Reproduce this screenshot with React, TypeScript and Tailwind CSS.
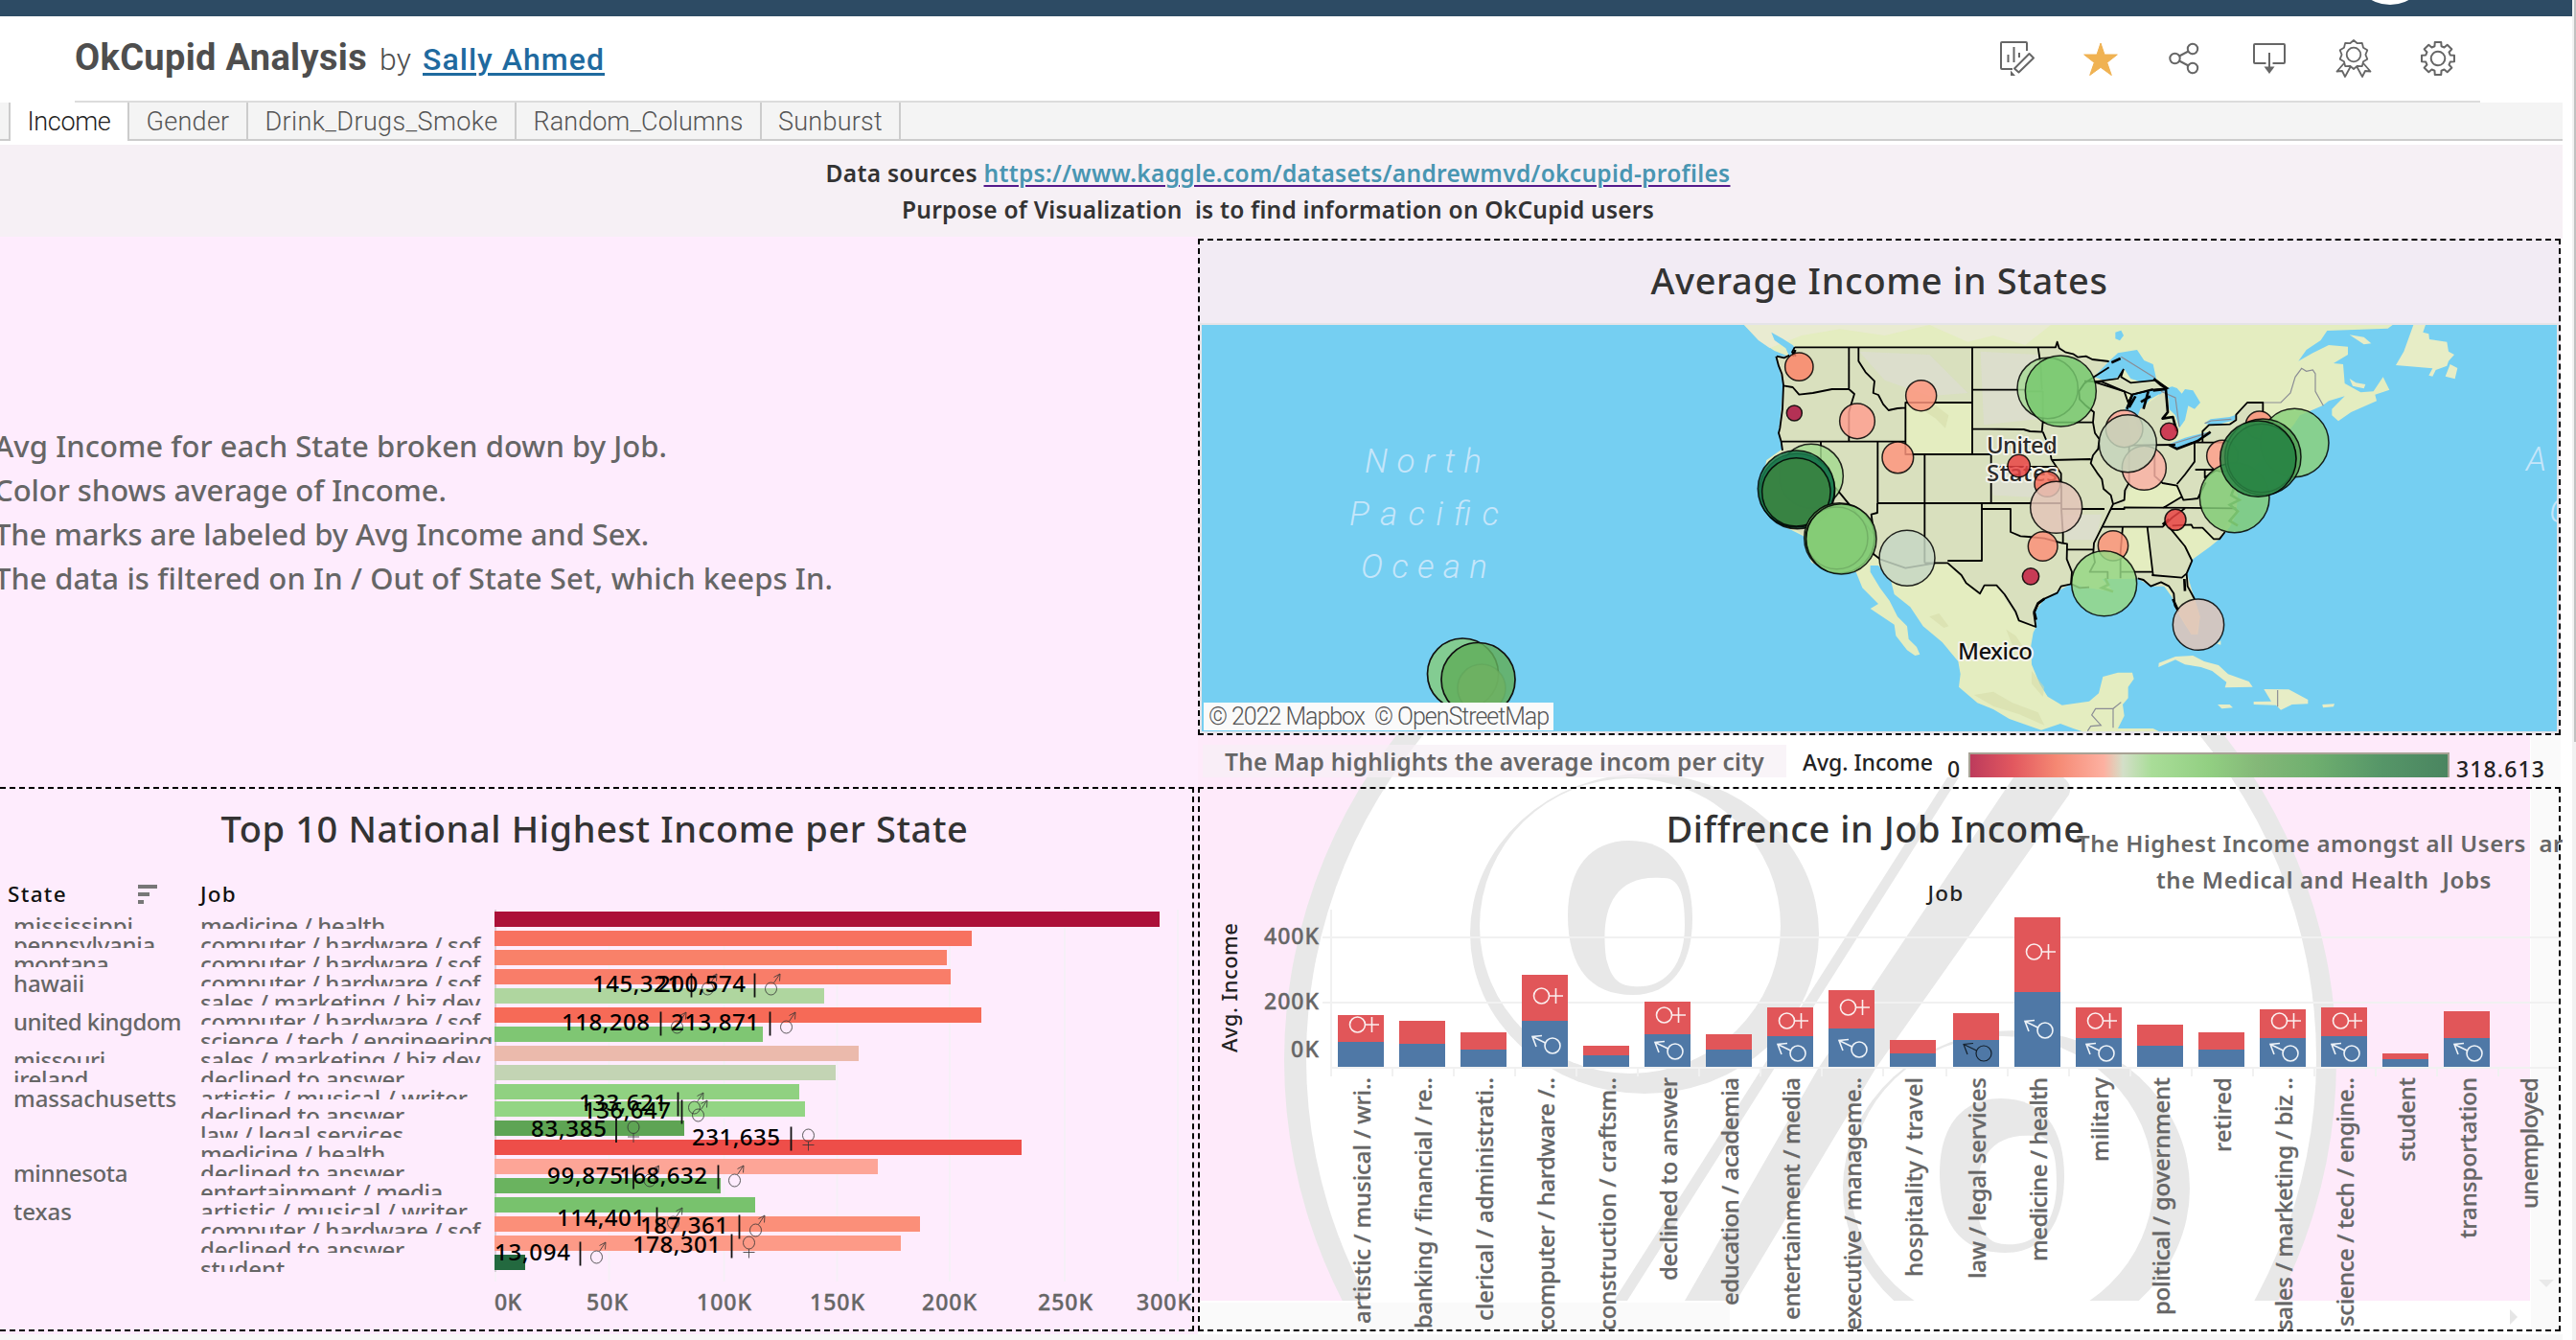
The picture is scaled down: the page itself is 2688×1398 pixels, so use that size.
import { useLayoutEffect, useRef, useState } from "react";
import type { ReactNode } from "react";

/** Text run tracked so that it fills a given width. */
function Fit({ w, className = "", children }: { w: number; className?: string; children: string }) {
  const ref = useRef<HTMLSpanElement>(null);
  const [ls, setLs] = useState(0);
  useLayoutEffect(() => {
    if (ref.current) setLs((w - ref.current.getBoundingClientRect().width) / children.length);
  }, [w, children]);
  return (
    <span ref={ref} className={"inline-block whitespace-pre " + className} style={{ letterSpacing: ls }}>
      {children}
    </span>
  );
}

const tabs = [
  { name: "Income", box: "w-[125px]", w: 87 },
  { name: "Gender", box: "w-[124px]", w: 87 },
  { name: "Drink_Drugs_Smoke", box: "w-[280px]", w: 243 },
  { name: "Random_Columns", box: "w-[256px]", w: 219 },
  { name: "Sunburst", box: "w-[145px]", w: 109 },
];

function Icon({ children }: { children: ReactNode }) {
  return (
    <svg className="size-12 shrink-0" viewBox="0 0 48 48" fill="none" stroke="#666" strokeWidth="2">
      {children}
    </svg>
  );
}

function gearPath() {
  let d = "";
  for (let i = 0; i < 8; i++) {
    const a = (i * Math.PI) / 4 - Math.PI / 2;
    const pts = [
      [-0.27, 13.2],
      [-0.19, 17.3],
      [0.19, 17.3],
      [0.27, 13.2],
    ];
    pts.forEach(([da, r], j) => {
      d += `${i === 0 && j === 0 ? "M" : "L"}${(24 + r * Math.cos(a + da)).toFixed(2)} ${(24 + r * Math.sin(a + da)).toFixed(2)}`;
    });
  }
  return d + "Z";
}

function rosettePath() {
  let d = "M";
  for (let i = 0; i < 20; i++) {
    const a = (i * Math.PI) / 10 - Math.PI / 2;
    const r = i % 2 === 0 ? 15 : 12.4;
    d += `${(24 + r * Math.cos(a)).toFixed(2)} ${(20 + r * Math.sin(a)).toFixed(2)} `;
  }
  return d + "Z";
}

function Header() {
  return (
    <header className="flex h-[88px] items-center justify-between bg-white pl-[78px] pr-[116px]">
      <div className="flex items-baseline font-['Roboto'] leading-[90px] text-[#4e4e4e]">
        <Fit w={305} className="mr-[13px] text-[38px] font-bold">OkCupid Analysis</Fit>
        <Fit w={33} className="mr-[12px] text-[32px] font-light">by</Fit>
        <a className="text-[32px] font-medium text-[#1f6a9f]">
          <Fit w={190} className="underline decoration-[3px] underline-offset-[3px]">Sally Ahmed</Fit>
        </a>
      </div>
      <div className="flex gap-10">
        <Icon>
          <path d="M35 16V8a1 1 0 0 0-1-1H9a1 1 0 0 0-1 1v26a1 1 0 0 0 1 1h11M15.500 20v8M21.500 12v16M27 18v5" />
          <path d="M22 34.500L37.500 19l4.500 4.500L26.500 38.500Z" strokeLinejoin="round" />
          <path d="M18 36.500v5.500h5Z" fill="#666" stroke="none" />
        </Icon>
        <Icon>
          <path
            d="M24 8l4 12h13.300l-10.600 8.300 4.600 13.200L24 33.300 12.700 41.500l4.600-13.200L6.700 20H20Z"
            fill="#f0b252"
            stroke="#f0b252"
            strokeLinejoin="round"
            strokeWidth="1"
          />
        </Icon>
        <Icon>
          <circle cx="13.500" cy="24" r="5.200" />
          <circle cx="32" cy="14" r="5.200" />
          <circle cx="32" cy="34" r="5.200" />
          <path d="M18 21.500l9.500-5M18 26.500l9.500 5" />
        </Icon>
        <Icon>
          <path d="M20.500 29H9a1 1 0 0 1-1-1V10a1 1 0 0 1 1-1h30a1 1 0 0 1 1 1v18a1 1 0 0 1-1 1H27.500M24 18v16" />
          <path d="M18.500 32.500h11L24 40Z" fill="#666" stroke="none" />
        </Icon>
        <Icon>
          <path d={rosettePath()} strokeLinejoin="round" strokeWidth="1.800" />
          <circle cx="24" cy="20" r="7.300" strokeWidth="1.800" />
          <path d="M14 29L6.500 37.500l5.500-.5 3 6 6-11M34 29l7.500 8.500-5.500-.5-3 6-6-11" strokeWidth="1.800" strokeLinejoin="round" />
        </Icon>
        <Icon>
          <path d={gearPath()} strokeLinejoin="round" />
          <circle cx="24" cy="24" r="7.300" />
        </Icon>
      </div>
    </header>
  );
}

const STATE_LINES =
  "M278 97H1095L1100 80L1106 100L1125 112L1150 118L1165 128L1190 125L1210 135L1262 141M220 125L228 155L238 180L243 215L240 290L232 350L228 365L236 392L240 420M222 125L245 130L262 122M278 97L270 112L282 125M448 97V228L465 243L455 275L448 300V392M243 217L272 222L292 245L335 240L395 228H448M236 392H625M478 97V140L500 175L528 203L524 240L540 246L555 275L572 294L600 288L625 286M625 392V270H834M834 97V432M834 230H1000M834 352L995 354L1015 360L1055 362M625 392V432H893V585M685 432V772M538 392V585H1113M893 471H1095M360 392V480L440 578L524 680M537 585V615L518 620L522 650L530 690L520 740L545 760L625 788L720 772H757L800 810L815 835L858 868L872 842L910 842L935 870L970 925L980 952L1033 972L1027 930L1040 900L1060 884L1100 866L1112 845L1143 838M685 772H757M757 765H864V585M864 603H954V675L985 688L1010 690L1060 695L1115 710L1131 712L1130 760L1146 800L1143 838M1113 530V603L1118 680V708M1113 603H1248M1131 730H1213M1000 235H1055V330L1052 362M1040 97L1048 150L1052 230M1055 332H1212M1055 362L1075 410L1082 448L1097 470L1112 492V530M1082 450L1205 447M1212 332L1215 300L1190 280L1170 260L1168 235L1185 210L1215 190L1262 160M1212 332L1218 365L1232 385L1228 415L1212 435L1205 460L1225 490L1240 510L1245 540L1268 560L1275 588L1250 640L1215 710L1213 740L1218 770L1202 800H1258V822M1275 588L1310 575L1312 545L1325 520V405M1268 603H1310V598L1660 601M1243 659H1430L1460 630L1500 601M1305 659L1298 740V820M1382 659L1400 810M1300 800H1396M1396 810L1490 818L1505 805M1185 203L1240 205L1310 235L1322 270M1322 270L1335 245L1400 228M1325 404L1470 402M1405 420V500L1430 522L1475 530L1495 575L1540 570L1565 520M1475 525L1500 495L1530 455V395M1430 601L1490 565M1532 480H1640M1530 395H1620M1562 480V505L1600 480M1450 659L1500 720L1522 765L1505 805L1508 845L1530 885M1460 655L1520 652L1525 662L1555 662L1590 697L1608 697L1625 675M1555 392V360L1575 340L1640 338L1660 325V308L1695 270H1744V300M1352 820L1370 825L1393 845L1425 832L1450 845L1465 868L1468 905L1480 925M1145 838L1170 850L1200 848";

const US_FILL =
  "M278 97H1095L1100 80L1125 112L1262 141L1215 190L1240 205L1310 235L1320 290L1335 400L1450 404L1532 390L1560 390L1575 340L1640 338L1660 308L1695 270H1744V330L1720 470L1665 520L1660 601L1620 670L1608 697L1555 662L1460 655L1522 765L1505 800L1530 885L1547 940L1535 995L1520 995L1468 905L1450 845L1393 845L1352 820L1300 822L1240 822L1275 862L1200 850L1143 838L1060 884L1027 930L1033 972L980 952L910 842H872L858 868L757 768L625 788L520 740L400 800L330 770L310 690L200 600L175 520L240 420L228 365L243 215L220 125L262 125Z";

const LAND =
  "M120 27L165 75L215 108L262 127L220 125L243 205L240 290L228 365L240 415L190 450L175 520L200 600L250 660L310 690L330 770L400 800L470 800L490 850L540 900L515 915L590 965L595 1000L630 1045L655 1062L670 1058L660 1035L635 1010L630 970L600 940L575 890L545 850L515 800V780H540L580 830L590 870L640 910L680 970L740 1020L790 1080L797 1120L792 1160L850 1210L900 1230L950 1260L1050 1295L1110 1275L1150 1290L1180 1300H1420L1400 1290H1290L1310 1250L1305 1215L1322 1195V1160L1340 1135L1335 1115H1290L1243 1128L1230 1180L1200 1205L1115 1217L1070 1190L1045 1150L1020 1090L1018 1030L1025 990L1035 970L1030 920L1060 885L1110 850L1145 838L1200 850L1275 862L1240 822L1300 822L1350 820L1395 845L1425 832L1460 880L1470 915L1500 965L1520 995H1540L1547 940L1530 885L1505 830V790L1522 762L1580 720L1610 695L1640 660L1660 620L1665 560L1640 500L1720 470L1790 400L1840 340L1860 310L1930 280L1950 265L2000 250L1960 290V310L1980 328L2020 300L2100 265L2095 245L2140 230L2120 190L2090 235L2050 238L2000 210L1995 150L1965 147L2010 120V95L1950 90L1900 115L1855 140L1880 105L1925 75L1945 45L2135 38L2150 27Z";

const ISLANDS =
  "M955 27H993L985 50L1003 55L1005 72L1060 80L1065 110L1083 120L1065 140L1060 155L1025 168L1015 188L1003 185L1015 163L900 153L925 110ZM1070 150L1093 162L1085 196L1055 188ZM755 58L800 65L823 85L800 88ZM755 195L775 208L805 213L800 226L765 218ZM157 1098L158 1085L210 1065L265 1062L300 1080L345 1092L375 1120L440 1143L452 1160L365 1162L370 1145L325 1110L290 1098L240 1090L210 1075ZM487 1167L565 1168L625 1200V1213L575 1215L540 1232L525 1217L455 1215V1206L510 1205ZM342 1215H380L390 1225L355 1228ZM670 1215L708 1213L705 1222L672 1225ZM340 1025L352 1015V1028Z";

const bubbles: [number, number, number, string][] = [
  [292, 158, 44, "#fb8468"],
  [277, 303, 24, "#ad1040"],
  [474, 328, 55, "#ffa090"],
  [674, 248, 48, "#fe957d"],
  [601, 442, 49, "#fe957d"],
  [330, 500, 100, "#a4da90"],
  [286, 547, 118, "#1a6e4c"],
  [283, 540, 120, "#1a7a4c"],
  [283, 550, 107, "#3d8442"],
  [418, 694, 110, "#82cc76"],
  [410, 694, 97, "#8acb76"],
  [424, 697, 110, "#84cc76"],
  [630, 757, 87, "#c6d6c3"],
  [980, 468, 35, "#ea4343"],
  [1069, 525, 40, "#f66c5a"],
  [1097, 598, 81, "#e2c5b8"],
  [1055, 720, 46, "#fb9078"],
  [1017, 814, 26, "#c41c40"],
  [1070, 225, 95, "#a8da97"],
  [1111, 234, 111, "#76c86e"],
  [1310, 352, 58, "#ffa79a"],
  [1372, 475, 69, "#fab2a4"],
  [1321, 398, 90, "#c5d4bb"],
  [1275, 718, 47, "#fc9478"],
  [1247, 836, 102, "#96d884"],
  [1450, 361, 27, "#ca1f40"],
  [1733, 340, 43, "#fb9078"],
  [1617, 437, 49, "#fea08c"],
  [1843, 396, 107, "#8ad07c"],
  [1655, 568, 109, "#82cc76"],
  [1744, 440, 119, "#4f9c54"],
  [1740, 444, 107, "#2f8a4c"],
  [1729, 446, 119, "#2a8444"],
];

const topBubbles: [number, number, number, string][] = [
  [1470, 637, 33, "#ea4343"],
  [1542, 965, 80, "#e2c5b8"],
];

function IncomeMap() {
  return (
    <svg className="block h-[424px] w-[1414px] bg-[#75cff2]" viewBox="1254 339 1414 424">
      <g transform="translate(1780 330) scale(.33333)">
        <path d={LAND} fill="#e4edc0" />
        <path d="M120 27L165 75L200 100L300 60L420 40L560 60L700 27ZM700 27L820 80L900 60L1000 90L1080 27Z" fill="#eaead4" opacity=".8" />
        <path d={ISLANDS} transform="translate(1260 0)" fill="#e7edc6" />
        <path d={US_FILL} fill="#d9e0be" />
        <path d="M860 110L1040 120L1050 320L870 340ZM880 480L1100 500L1100 570L900 560ZM480 110L700 120L820 240L700 250L560 200ZM1100 620L1240 620L1220 700L1130 700Z" fill="#ddddd2" opacity=".7" />
        <path d="M625 270H834V432H625ZM1305 659H1382L1398 800H1298ZM1310 575L1325 540L1430 522L1475 530L1490 565L1430 598L1310 598ZM1450 659L1520 652L1555 662L1588 700L1522 762Z" fill="#e4edc0" />
        <path d="M205 50L240 70L272 90L280 100L262 127L250 100L215 75ZM1282 50L1300 44L1308 60L1296 76L1282 70ZM1215 190L1262 141L1290 115L1350 105L1372 138L1400 150L1410 195L1370 208L1330 195L1310 165L1290 190L1260 205ZM1312 290L1335 245L1400 228L1440 232L1390 260L1360 300L1345 325ZM1405 235L1460 220L1475 225L1490 242L1500 228L1525 232L1548 270L1530 290L1510 280L1500 325L1482 350L1470 310L1450 290L1445 260ZM1450 400L1500 380L1570 362L1580 370L1540 388L1475 415ZM1560 335L1580 322L1640 315L1660 308L1655 325L1590 342Z" fill="#75cff2" />
        <path d="M1215 205L1290 195L1308 165L1300 190L1330 208L1410 200L1445 225L1400 230L1335 245L1310 235Z" fill="#d9e0be" stroke="#000" strokeWidth="5" />
        <path d="M1435 235L1450 260V300L1430 320L1460 312L1475 340L1470 375L1450 402H1370L1345 330L1360 290Z" fill="#d9e0be" />
        <path d="M690 300L720 280L760 310L750 350L720 320ZM840 1185L900 1175L960 1210L1040 1240L1060 1280L980 1245L900 1220ZM940 980L970 1000L1010 1060L1000 1080L960 1030ZM1020 1110L1060 1160L1055 1190L1020 1150ZM700 940L730 930L760 970L745 975Z" fill="#d3daa6" opacity=".5" />
        <path
          d="M1300 127L1405 192M1425 235L1470 255L1482 345M1452 402L1572 365M1562 335L1582 327L1645 322M1744 270H1800L1830 240L1845 190L1865 163L1880 172L1900 168L1908 180V235L1933 280M1790 1170V1222M1195 1298L1205 1283L1237 1280L1208 1248L1220 1228H1275L1300 1208M1275 1228V1288"
          fill="none"
          stroke="#8a8c94"
          strokeWidth="3.500"
        />
        <g fill="none" stroke="#000" strokeLinejoin="round">
          <path d={STATE_LINES} strokeWidth="5.500" />
          <path
            d="M1060 884L1040 898L1028 925L1034 950M1335 245L1318 290M1345 250L1325 285M1385 235L1370 290M1400 232L1440 228L1446 300L1430 320L1462 315L1474 360M1362 268L1392 250M1450 402L1475 415L1540 390L1580 362M1462 885L1478 920M1498 822L1500 860M280 105L272 125M1402 195L1425 215L1445 228M1430 652L1450 635M1270 145L1298 132"
            strokeWidth="8"
          />
        </g>
        <path d="M1630 490L1660 520L1645 560L1670 575L1640 590L1665 610L1640 640L1665 655M1250 820L1260 840L1240 850L1275 862" fill="none" stroke="#3d7d3d" strokeWidth="8" />
      </g>
      <g fontFamily="'Roboto'" fontStyle="italic" fontWeight="300" fontSize="35" fill="#c6e6fa">
        <text x="1424" y="493" textLength="122">North</text>
        <text x="1408" y="548" textLength="156">Pacific</text>
        <text x="1420" y="603" textLength="132">Ocean</text>
        <text x="2636" y="491">A</text>
        <text x="2660" y="545">O</text>
      </g>
      <g fontFamily="'Noto Sans'" fontWeight="500" fontSize="24" fill="#2b2b2b" stroke="#f4f4ec" strokeWidth="4" paintOrder="stroke" strokeLinejoin="round">
        <text x="2073" y="472.500" textLength="74">United</text>
        <text x="2073" y="501.500" textLength="74">States</text>
        <text x="2043" y="687.500" textLength="78" fill="#111">Mexico</text>
      </g>
      <g transform="translate(1780 330) scale(.33333)" stroke="#000" strokeWidth="4.500">
        {bubbles.map(([cx, cy, r, fill], i) => (
          <circle key={i} cx={cx} cy={cy} r={r} fill={fill} fillOpacity=".84" strokeOpacity=".85" />
        ))}
        {topBubbles.map(([cx, cy, r, fill], i) => (
          <circle key={i} cx={cx} cy={cy} r={r} fill={fill} fillOpacity=".84" strokeOpacity=".85" />
        ))}
      </g>
      <g stroke="#111" strokeWidth="1.700" fillOpacity=".84">
        <circle cx="1526.500" cy="703" r="37" fill="#86cc80" />
        <circle cx="1546" cy="718" r="25" fill="#b0c080" strokeOpacity=".3" />
        <circle cx="1542.500" cy="709" r="38.500" fill="#62ae5c" />
      </g>
    </svg>
  );
}

function PercentCounter() {
  return (
    <>
      <path d="M1700 877C1745 877 1766 910 1766 958C1766 1010 1742 1038 1704 1038C1660 1038 1636 1010 1636 955C1636 905 1660 877 1700 877Z" fill="#e8e8e8" />
      <path d="M1734 916C1755 914 1758 940 1758 965C1758 1010 1735 1032 1704 1029C1684 1028 1680 1014 1676 1000C1670 955 1680 912 1734 916Z" fill="#fff" />
    </>
  );
}

function Watermark() {
  return (
    <svg className="absolute left-0 top-0 h-[590px] w-[1390px]" viewBox="1250 767 1390 590">
      <rect x="1250" y="767" width="1390" height="590" fill="#feeafa" />
      <circle cx="1889" cy="1106" r="549" fill="#e8e8e8" />
      <circle cx="1890" cy="1104" r="527" fill="#fff" />
      <g fill="#e8e8e8">
        <path d="M2032 811h12L1698 1357h-14Z" />
        <path d="M2101 811h52q10 8 6 18L1957 1115L1812 1357H1758L1897 1115Z" />
        <ellipse cx="1716" cy="974" rx="182" ry="167" />
        <ellipse cx="2104" cy="1240" rx="181" ry="165" />
      </g>
      <ellipse cx="1701" cy="966" rx="157" ry="154" fill="#fff" />
      <ellipse cx="2089" cy="1233" rx="158" ry="152" fill="#fff" />
      <PercentCounter />
      <g transform="translate(388 269)">
        <PercentCounter />
      </g>
    </svg>
  );
}

const stateCells = [
  { name: "mississippi", w: 125, h: "h-5" },
  { name: "pennsylvania", w: 148, h: "h-5" },
  { name: "montana", w: 99, h: "h-5" },
  { name: "hawaii", w: 74, h: "h-10" },
  { name: "united kingdom", w: 175, h: "h-10" },
  { name: "missouri", w: 96, h: "h-5" },
  { name: "ireland", w: 78, h: "h-5" },
  { name: "massachusetts", w: 170, h: "h-[78px]" },
  { name: "minnesota", w: 119, h: "h-10" },
  { name: "texas", w: 61, h: "h-20" },
];

const CH = "computer / hardware / sof";
const jobs: [string, number][] = [
  ["medicine / health", 193], [CH, 292], [CH, 292], [CH, 292],
  ["sales / marketing / biz dev", 292], [CH, 292], ["science / tech / engineering", 305],
  ["sales / marketing / biz dev", 292], ["declined to answer", 213], ["artistic / musical / writer", 279],
  ["declined to answer", 213], ["law / legal services", 212], ["medicine / health", 193],
  ["declined to answer", 213], ["entertainment / media", 253], ["artistic / musical / writer", 279],
  [CH, 292], ["declined to answer", 213], ["student", 88],
];

const bars: [number, number, string][] = [
  [951, 1210, "#ac1038"], [971, 1014, "#f77160"], [991, 988, "#f98169"], [1011, 992, "#f97d69"],
  [1031, 860, "#afd69f"], [1051, 1024, "#f66a57"], [1071, 796, "#7fc673"], [1091, 896, "#ebbaac"],
  [1111, 872, "#c3d4b4"], [1131, 834, "#90d181"], [1149, 840, "#93d584"], [1169, 714, "#5ea454"],
  [1189, 1066, "#ee4e49"], [1209, 916, "#fda597"], [1229, 752, "#6ab35f"], [1249, 788, "#78c26d"],
  [1269, 960, "#fb8f79"], [1289, 940, "#fd9a87"], [1309, 548, "#23693f"],
];

const marks: [string, number, number, number, "m" | "f"][] = [
  ["145,321", 618, 1034.5, 721.5, "m"],
  ["200,574", 686, 1034.5, 787.5, "m"],
  ["118,208", 586, 1074.5, 689.5, "m"],
  ["213,871", 700, 1074.5, 803.5, "m"],
  ["133,621", 604, 1158.5, 707.5, "m"],
  ["136,647", 608, 1166.5, 711.5, "m"],
  ["83,385", 554, 1186, 643, "f"],
  ["231,635", 722, 1194.5, 825.5, "f"],
  ["99,875", 571, 1234.5, 661, "m"],
  ["168,632", 646, 1234.5, 749.5, "m"],
  ["114,401", 581, 1278.5, 685.5, "m"],
  ["187,361", 668, 1286.5, 771.5, "m"],
  ["178,301", 660, 1306.5, 763.5, "f"],
  ["13,094", 516, 1314.5, 605.5, "m"],
];

function StatePlot() {
  return (
    <svg className="block h-[437px] w-[728px]" viewBox="516 949 728 437" fontFamily="'Noto Sans'">
      <path d="M635.500 949V1337M755.500 949V1337M873.500 949V1337M991 949V1337M1111 949V1337M1229 949V1337" stroke="#f6f0f7" strokeWidth="2" />
      <path d="M517 949V1327" stroke="#d9d0d9" strokeWidth="2" />
      <path d="M517 1327V1337" stroke="#f6f0f7" strokeWidth="2" />
      {bars.map(([y, end, fill]) => (
        <rect key={y} x="516" y={y} width={end - 516} height="16" fill={fill} />
      ))}
      {marks.map(([t, x, y, bx, s]) => (
        <g key={t}>
          <text x={x} y={y} fontSize="24" fontWeight="500" textLength={t.length === 7 ? 92 : 79}>{t}</text>
          <path d={`M${bx} ${y - 19}V${y + 6}`} stroke="#111" strokeWidth="1.800" />
          <g fill="none" stroke="#333" strokeWidth=".8">
            {s === "m" ? (
              <>
                <ellipse cx={bx + 17} cy={y - 3} rx="6" ry="6.500" />
                <path d={`M${bx + 20} ${y - 9}L${bx + 26} ${y - 18}M${bx + 20} ${y - 15}L${bx + 26.5} ${y - 18.5}L${bx + 26} ${y - 11}`} />
              </>
            ) : (
              <>
                <ellipse cx={bx + 18} cy={y - 10} rx="6" ry="6.500" />
                <path d={`M${bx + 18} ${y - 3.5}V${y + 6}M${bx + 12} ${y}H${bx + 24}`} />
              </>
            )}
          </g>
        </g>
      ))}
      <g fontSize="23" fontWeight="500" fill="#666" stroke="#666" strokeWidth=".4">
        <text x="516" y="1367" textLength="28">0K</text>
        <text x="612" y="1367" textLength="43">50K</text>
        <text x="727" y="1367" textLength="57">100K</text>
        <text x="845" y="1367" textLength="57">150K</text>
        <text x="962" y="1367" textLength="57">200K</text>
        <text x="1083" y="1367" textLength="57">250K</text>
        <text x="1186" y="1367" textLength="57">300K</text>
      </g>
    </svg>
  );
}

const cols: [string, number, number, number, number?, number?][] = [
  ["artistic / musical / wri..", 1059, 1087, 257, 1069],
  ["banking / financial / re..", 1065, 1089, 262],
  ["clerical / administrati..", 1077, 1095, 254],
  ["computer / hardware /..", 1017, 1065, 264, 1039, 1091],
  ["construction / craftsm..", 1091, 1101, 264],
  ["declined to answer", 1045, 1079, 212, 1059, 1097],
  ["education / academia", 1079, 1095, 238],
  ["entertainment / media", 1051, 1081, 253, 1065, 1099],
  ["executive / manageme..", 1033, 1073, 264, 1051, 1095],
  ["hospitality / travel", 1085, 1099, 208],
  ["law / legal services", 1057, 1085, 210, 0, 1099],
  ["medicine / health", 957, 1035, 192, 993, 1075],
  ["military", 1051, 1083, 88, 1065, 1099],
  ["political / government", 1069, 1091, 248],
  ["retired", 1077, 1095, 78],
  ["sales / marketing / biz ..", 1053, 1083, 264, 1065, 1099],
  ["science / tech / engine..", 1051, 1081, 260, 1065, 1099],
  ["student", 1099, 1105, 88],
  ["transportation", 1055, 1083, 168, 0, 1099],
  ["unemployed", 1113, 1113, 137],
];

function JobPlot() {
  return (
    <svg className="block h-[441px] w-[1418px]" viewBox="1252 946 1418 441" fontFamily="'Noto Sans'" fontWeight="500">
      <path d="M1380 978H2670M1380 1046H2670M1389 1114H2670M1389 949V1123" stroke="#f1f1f1" strokeWidth="2" />
      <g fontSize="23" fill="#666" stroke="#666" strokeWidth=".4">
        <text x="1319" y="984.500" textLength="57">400K</text>
        <text x="1319" y="1052.500" textLength="57">200K</text>
        <text x="1347" y="1102.500" textLength="29">0K</text>
      </g>
      <text transform="translate(1291 1098) rotate(-90)" fontSize="22" fill="#222" textLength="135">Avg. Income</text>
      {cols.map(([t, top, mid, len, f, m], i) => {
        const x = 1396 + 64 * i + (i > 9 ? 2 : 0);
        return (
          <g key={t}>
            <path d={`M${x - 7} 1114V1123`} stroke="#f1f1f1" strokeWidth="2" />
            <rect x={x} y={top} width="48" height={mid - top} fill="#e15659" />
            <rect x={x} y={mid} width="48" height={1113 - mid} fill="#4f78a6" />
            {f ? (
              <g fill="none" stroke="#fbeeee" strokeWidth="1.600">
                <circle cx={x + 20.5} cy={f} r="8" />
                <path d={`M${x + 28.5} ${f}H${x + 43}M${x + 35.5} ${f - 8}V${f + 8}`} />
              </g>
            ) : null}
            {m ? (
              <g fill="none" stroke={i === 10 ? "#14202c" : "#eef3f8"} strokeWidth={i === 10 ? "1.200" : "1.600"}>
                <circle cx={x + 32} cy={m} r="8" />
                <path d={`M${x + 24.5} ${m - 3}L${x + 11} ${m - 9.5}M${x + 21} ${m - 10.5}L${x + 11} ${m - 9.5}L${x + 15} ${m + 1}`} />
              </g>
            ) : null}
            <text
              transform={`translate(${x + 34} ${1124 + len}) rotate(-90)`}
              fontSize="24"
              fill="#666"
              stroke="#666"
              strokeWidth=".3"
              textLength={len}
            >
              {t}
            </text>
          </g>
        );
      })}
      <path d="M2649 1335h16l-8 8Z" fill="#e9e9e9" />
      <path d="M2619 1366v16l8-8Z" fill="#e6e6e6" />
    </svg>
  );
}

export default function App() {
  return (
    <div className="flex h-[1398px] w-[2688px] overflow-hidden bg-white font-['Noto_Sans',sans-serif]">
      <div className="flex w-[2684px] flex-col">
        <div className="relative h-[17px] overflow-hidden bg-[#2d4b64]">
          <div className="absolute left-[2454px] top-[-75px] size-20 rounded-full bg-white" />
        </div>
        <Header />
        <div className="ml-[78px] h-[2px] w-[2510px] bg-[#dcdcdc]" />
        <nav className="flex h-10 w-[2674px] font-['Roboto'] text-[27px] font-light">
          <div className="w-[9px] border-b-2 border-[#ccc] bg-[#f4f4f4]" />
          {tabs.map((t, i) => (
            <div
              key={t.name}
              className={
                i === 0
                  ? "flex w-[126px] shrink-0 justify-center border-x-2 border-[#ccc] bg-white leading-[41px] text-[#222]"
                  : `flex shrink-0 justify-center border-b-2 border-r-2 border-[#ccc] bg-[#f4f4f4] leading-[41px] text-[#555] ${t.box}`
              }
            >
              <Fit w={t.w}>{t.name}</Fit>
            </div>
          ))}
          <div className="grow border-b-2 border-[#ccc] bg-[#f4f4f4]" />
        </nav>
        <div className="mt-1 flex h-24 w-[2674px] flex-col items-center bg-[#f6f0f5] pr-[7px] pt-[11px] text-[24.500px] font-semibold leading-[38px] text-[#333]">
          <div className="flex">
            <Fit w={165}>Data sources </Fit>
            <Fit w={779} className="text-[#4996b2] underline decoration-[#551a8b] decoration-2 underline-offset-[3px]">
              https://www.kaggle.com/datasets/andrewmvd/okcupid-profiles
            </Fit>
          </div>
          <Fit w={785}>{"Purpose of Visualization  is to find information on OkCupid users"}</Fit>
        </div>
        <div className="flex h-[1145px] w-[2674px]">
          <section className="flex w-[1250px] shrink-0 flex-col bg-[#feecfd]">
            <div className="-ml-[6px] flex h-[574px] flex-col pt-[195px] text-[31px] font-medium leading-[46px] text-[#666]">
              <Fit w={702} className="self-start">Avg Income for each State broken down by Job.</Fit>
              <Fit w={472} className="self-start">Color shows average of Income.</Fit>
              <Fit w={683} className="self-start">The marks are labeled by Avg Income and Sex.</Fit>
              <Fit w={875} className="self-start">The data is filtered on In / Out of State Set, which keeps In.</Fit>
            </div>
            <div className="flex h-[568px] w-[1246px] flex-col border-y-2 border-r-2 border-dashed border-black">
              <h2 className="flex h-[82px] items-center justify-center pr-[3px] text-[38px] font-medium text-[#333]">
                <Fit w={780}>Top 10 National Highest Income per State</Fit>
              </h2>
              <div className="flex h-11 items-center pl-2 pt-[11px] text-[22.500px] font-medium text-[#111]">
                <Fit w={62}>State</Fit>
                <div className="ml-[74px] flex w-[65px] flex-col gap-1">
                  <div className="h-1 w-5 bg-[#777]" />
                  <div className="h-1 w-3 bg-[#777]" />
                  <div className="h-1 w-[6px] bg-[#777]" />
                </div>
                <Fit w={38}>Job</Fit>
              </div>
              <div className="flex">
                <div className="w-[209px] pl-[14px] text-2xl font-medium text-[#666]">
                  {stateCells.map((s) => (
                    <div key={s.name} className={"overflow-hidden leading-[34px] " + s.h}>
                      <Fit w={s.w}>{s.name}</Fit>
                    </div>
                  ))}
                </div>
                <div className="w-[307px] text-2xl font-medium text-[#666]">
                  {jobs.map(([j, w], i) => (
                    <div key={i} className={i === 9 ? "h-[18px] overflow-hidden leading-[34px]" : "h-5 overflow-hidden leading-[34px]"}>
                      <Fit w={w}>{j}</Fit>
                    </div>
                  ))}
                </div>
                <StatePlot />
              </div>
            </div>
          </section>
          <section className="flex w-[1424px] shrink-0 flex-col">
            <div className="h-[2px] bg-[#f6f0f5]" />
            <div className="flex h-[518px] w-[1422px] flex-col border-2 border-dashed border-black bg-[#f2ebf4]">
              <h2 className="flex h-[86px] items-center justify-center pb-[4px] text-[38px] font-medium text-[#333]">
                <Fit w={477}>Average Income in States</Fit>
              </h2>
              <div className="relative border-2 border-[#e5e4e8]">
                <IncomeMap />
                <div className="absolute bottom-[1px] left-[2px] flex h-[29px] w-[365px] items-center justify-center bg-[#fafafa] font-['Roboto'] text-[25px] font-light text-[#555]">
                  <Fit w={355}>{"© 2022 Mapbox  © OpenStreetMap"}</Fit>
                </div>
              </div>
            </div>
            <div className="relative flex h-[625px] flex-col">
              <div className="absolute left-[1391px] top-0 h-[622px] w-[31px] bg-[#fafafa]" />
              <div className="absolute left-0 top-[592px] h-[30px] w-[555px] bg-[#fafafa]" />
              <Watermark />
              <div className="relative flex h-[54px] w-[1422px] items-start pl-[5px] pt-[10px]">
                <div className="flex h-[34px] w-[609px] items-center justify-center bg-[#f6f0f5]/70 pt-[3px] text-[24.500px] font-semibold text-[#666]">
                  <Fit w={563}>The Map highlights the average incom per city</Fit>
                </div>
                <Fit w={136} className="ml-[17px] text-[23px] font-medium leading-[36px] text-[#222]">Avg. Income</Fit>
                <div className="ml-[15px] h-[36px] w-[22px] text-[23px] font-medium leading-[50px] text-[#222]">0</div>
                <div className="mt-2 h-[26px] w-[502px] border-x-2 border-t-2 border-[#a8a295] bg-[linear-gradient(90deg,#bd3b5c_0%,#e2585f_9%,#f58873_18%,#fdb1a1_28%,#d3dfc8_32%,#a9dd98_38%,#92cf82_50%,#84b878_60%,#6faf6f_72%,#569668_86%,#4a8560_100%)]" />
                <Fit w={93} className="ml-[7px] text-[23px] font-medium leading-[50px] text-[#222]">318.613</Fit>
              </div>
              <div className="relative flex h-[568px] w-[1422px] flex-col border-2 border-dashed border-black">
                <div className="flex h-[82px] items-center justify-center text-[38px] font-medium text-[#333]">
                  <Fit w={437} className="relative -left-[4px]">Diffrence in Job Income</Fit>
                </div>
                <div className="flex h-[41px] justify-center pr-[3px] pt-[11px] text-[22.500px] font-medium leading-8 text-[#222]">
                  <Fit w={38} className="relative left-[71px]">Job</Fit>
                </div>
                <JobPlot />
                <div className="absolute -right-1 top-[38px] flex w-[507px] flex-col items-start overflow-hidden text-[24px] font-semibold leading-[38px] text-[#666]">
                  <Fit w={522}>{"The Highest Income amongst all Users  are"}</Fit>
                  <Fit w={350} className="ml-[83px]">{"the Medical and Health  Jobs"}</Fit>
                </div>
              </div>
            </div>
          </section>
        </div>
        <div className="h-[6px] w-[2674px] bg-[#f7f7f7]" />
      </div>
      <div className="flex w-1 flex-col bg-[#f1f1f1] pl-[2px]">
        <div className="h-[774px] bg-[#c1c1c1]" />
      </div>
    </div>
  );
}
